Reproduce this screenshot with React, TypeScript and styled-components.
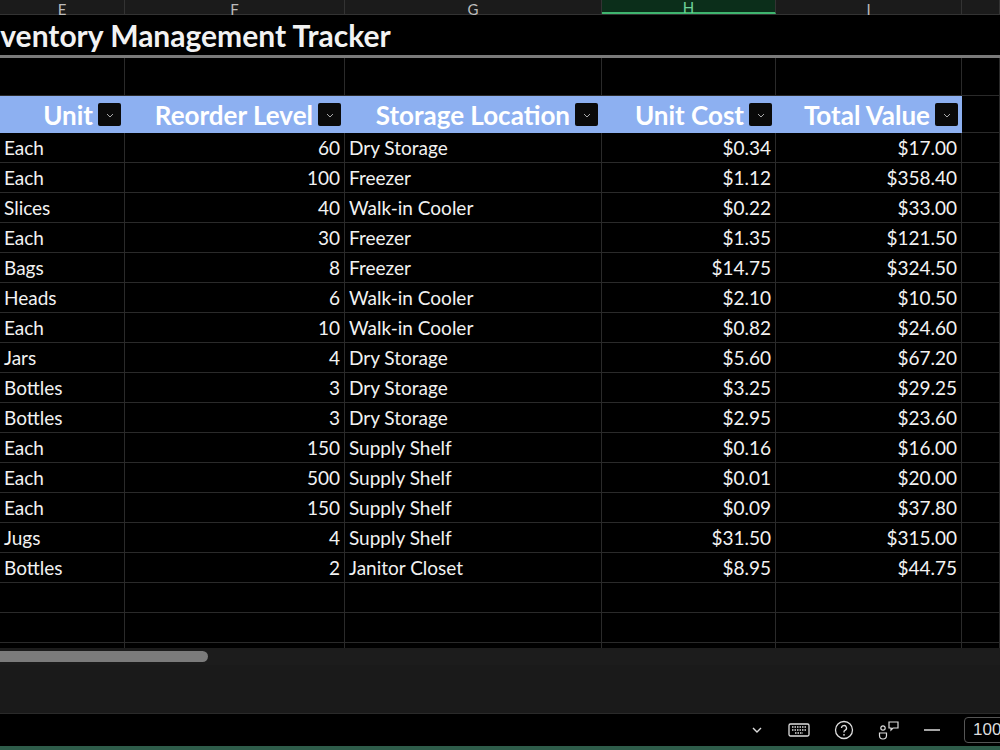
import React from "react";
import styled, { createGlobalStyle } from "styled-components";

const Global = createGlobalStyle`
  html, body { margin: 0; padding: 0; background: #000; overflow: hidden; }
  body { font-family: Lato, "Open Sans", sans-serif; color: #f2f2f2; }
`;

const COLS = "125px 220px 257px 174px 186px 38px";

const Page = styled.div`
  width: 1000px; height: 750px; display: flex; flex-direction: column; background: #000; overflow: hidden;
`;
const ColHeads = styled.div`
  display: grid; grid-template-columns: ${COLS}; height: 14px; flex: none; background: #1b1b1b; border-bottom: 1px solid #333;
`;
const ColHead = styled.div<{ $sel?: boolean }>`
  border-right: 1px solid #333; display: flex; justify-content: center; align-items: flex-end;
  font-size: 15px; line-height: 10px; color: ${(p) => (p.$sel ? "#6fd39a" : "#bbb")};
  background: ${(p) => (p.$sel ? "#0b2e1a" : "transparent")};
  border-bottom: ${(p) => (p.$sel ? "2px solid #3fb56f" : "none")};
`;
const TitleRow = styled.div`
  height: 40px; flex: none; border-bottom: 3px solid #7a7a7a; display: flex; align-items: center; overflow: hidden;
`;
const TitleText = styled.div`
  font-size: 30px; font-weight: 700; margin-left: -25px; white-space: nowrap;
`;
const Viewport = styled.div`
  height: 590px; flex: none; overflow: hidden;
`;
const Grid = styled.div`
  display: grid; grid-template-columns: ${COLS};
`;
const Cell = styled.div<{ $h?: number; $right?: boolean }>`
  height: ${(p) => p.$h ?? 30}px; box-sizing: border-box; border-right: 1px solid #2a2a2a; border-bottom: 1px solid #2a2a2a;
  display: flex; align-items: center; justify-content: ${(p) => (p.$right ? "flex-end" : "flex-start")};
  padding: 0 4px; font-size: 19px; white-space: nowrap; overflow: hidden;
`;
const HeadCell = styled.div`
  height: 37px; background: #8db0f1; display: flex; align-items: center; justify-content: flex-end; gap: 5px;
  padding-right: 4px; font-size: 26px; font-weight: 700; color: #fff; white-space: nowrap;
`;
const Filter = styled.div`
  width: 23px; height: 23px; background: #0a0a0a; border-radius: 2px; display: flex; align-items: center; justify-content: center;
`;
const ScrollArea = styled.div`
  height: 17px; flex: none; background: #1c1c1c; display: flex; align-items: center;
`;
const Thumb = styled.div`
  width: 208px; height: 11px; background: #7b7b7b; border-radius: 0 6px 6px 0;
`;
const SheetBar = styled.div`
  height: 48px; flex: none; background: #1a1a1a; border-bottom: 1px solid #2a2a2a;
`;
const Status = styled.div`
  height: 32px; flex: none; display: flex; align-items: center; justify-content: flex-end; gap: 24px; color: #ddd;
`;
const Zoom = styled.div`
  border: 1px solid #555; border-radius: 4px; height: 24px; padding: 0 0 0 8px; width: 30px; font-size: 17px;
  display: flex; align-items: center; font-family: "Liberation Sans", sans-serif; overflow: hidden; margin-right: -4px;
`;
const BottomLine = styled.div`
  height: 4px; flex: none; background: #2e5c4a;
`;

const Chev = () => (
  <svg width="10" height="10" viewBox="0 0 10 10"><path d="M2 4l3 3 3-3" stroke="#aaa" fill="none" strokeWidth="1" /></svg>
);

const rows: [string, string, string, string, string][] = [
  ["Each", "60", "Dry Storage", "$0.34", "$17.00"],
  ["Each", "100", "Freezer", "$1.12", "$358.40"],
  ["Slices", "40", "Walk-in Cooler", "$0.22", "$33.00"],
  ["Each", "30", "Freezer", "$1.35", "$121.50"],
  ["Bags", "8", "Freezer", "$14.75", "$324.50"],
  ["Heads", "6", "Walk-in Cooler", "$2.10", "$10.50"],
  ["Each", "10", "Walk-in Cooler", "$0.82", "$24.60"],
  ["Jars", "4", "Dry Storage", "$5.60", "$67.20"],
  ["Bottles", "3", "Dry Storage", "$3.25", "$29.25"],
  ["Bottles", "3", "Dry Storage", "$2.95", "$23.60"],
  ["Each", "150", "Supply Shelf", "$0.16", "$16.00"],
  ["Each", "500", "Supply Shelf", "$0.01", "$20.00"],
  ["Each", "150", "Supply Shelf", "$0.09", "$37.80"],
  ["Jugs", "4", "Supply Shelf", "$31.50", "$315.00"],
  ["Bottles", "2", "Janitor Closet", "$8.95", "$44.75"],
];

const heads = ["Unit", "Reorder Level", "Storage Location", "Unit Cost", "Total Value"];

export default function App() {
  return (
    <Page>
      <Global />
      <ColHeads>
        {["E", "F", "G", "H", "I", ""].map((c, i) => (
          <ColHead key={i} $sel={c === "H"}>{c}</ColHead>
        ))}
      </ColHeads>
      <TitleRow><TitleText>Inventory Management Tracker</TitleText></TitleRow>
      <Viewport>
        <Grid>
          {Array.from({ length: 6 }).map((_, i) => <Cell key={i} $h={38} />)}
          {heads.map((h) => (
            <HeadCell key={h}>{h}<Filter><Chev /></Filter></HeadCell>
          ))}
          <Cell $h={37} />
          {rows.map((r, i) => (
            <React.Fragment key={i}>
              <Cell>{r[0]}</Cell>
              <Cell $right>{r[1]}</Cell>
              <Cell>{r[2]}</Cell>
              <Cell $right>{r[3]}</Cell>
              <Cell $right>{r[4]}</Cell>
              <Cell />
            </React.Fragment>
          ))}
          {Array.from({ length: 18 }).map((_, i) => <Cell key={"e" + i} />)}
        </Grid>
      </Viewport>
      <ScrollArea><Thumb /></ScrollArea>
      <SheetBar />
      <Status>
        <svg width="14" height="14" viewBox="0 0 14 14"><path d="M3 5l4 4 4-4" stroke="#ddd" fill="none" strokeWidth="1.4" /></svg>
        <svg width="22" height="16" viewBox="0 0 22 16"><rect x="1" y="2" width="20" height="12" rx="1.5" stroke="#ddd" fill="none" strokeWidth="1.3" /><path d="M4 5h14M4 8h14M7 11h8" stroke="#ddd" strokeWidth="1.3" strokeDasharray="1.5 1" /></svg>
        <svg width="20" height="20" viewBox="0 0 20 20"><circle cx="10" cy="10" r="8.5" stroke="#ddd" fill="none" strokeWidth="1.3" /><path d="M7.5 8a2.5 2.5 0 1 1 3.5 2.3c-.7.3-1 .8-1 1.5v.7" stroke="#ddd" fill="none" strokeWidth="1.3" /><circle cx="10" cy="14.8" r=".9" fill="#ddd" /></svg>
        <svg width="22" height="20" viewBox="0 0 22 20"><circle cx="5" cy="8" r="2.2" stroke="#ddd" fill="none" strokeWidth="1.2" /><path d="M1.5 13h7v2.5a3.5 3.5 0 0 1-7 0z" stroke="#ddd" fill="none" strokeWidth="1.2" /><path d="M11 2h9v6h-5l-2 2v-2h-2z" stroke="#ddd" fill="none" strokeWidth="1.2" /></svg>
        <svg width="16" height="4" viewBox="0 0 16 4"><path d="M0 2h16" stroke="#ddd" strokeWidth="1.5" /></svg>
        <Zoom>100%</Zoom>
      </Status>
      <BottomLine />
    </Page>
  );
}
